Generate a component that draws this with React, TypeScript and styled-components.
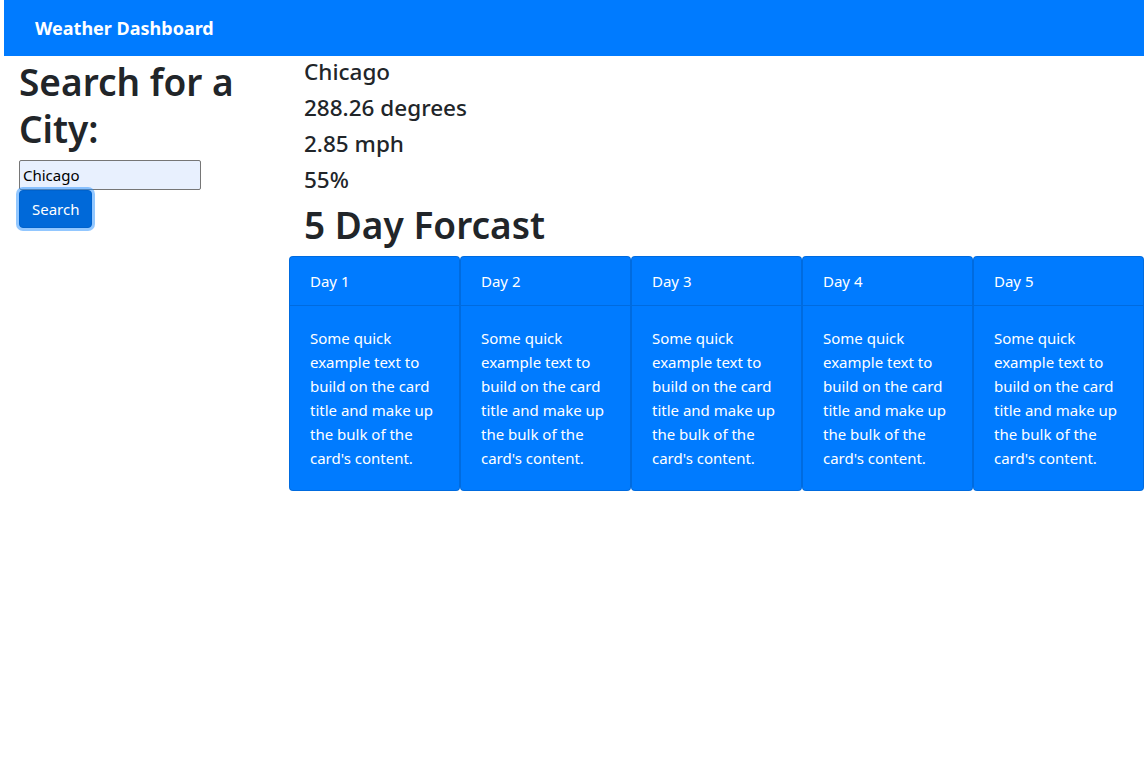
import React from "react";
import styled, { createGlobalStyle } from "styled-components";

const Global = createGlobalStyle`
  html, body { margin: 0; padding: 0; background: #fff; }
  body {
    padding-left: 4px;
    font-family: "Noto Sans", "Open Sans", sans-serif;
    font-size: 16px;
    line-height: 1.5;
    color: #212529;
  }
  * { box-sizing: border-box; }
`;

const Navbar = styled.nav`
  height: 56px;
  background: #007bff;
  display: flex;
  align-items: center;
  padding: 0 31px;
`;

const Brand = styled.span`
  color: #fff;
  font-size: 18px;
  font-weight: 700;
  line-height: 1;
`;

const Row = styled.div`
  display: flex;
  width: 1140px;
`;

const SideCol = styled.div`
  width: 285px;
  padding: 0 15px;
  display: flex;
  flex-direction: column;
  align-items: flex-start;
`;

const MainCol = styled.div`
  width: 855px;
`;

const Title = styled.h1`
  margin: 0 0 8px;
  padding-top: 2px;
  font-size: 37px;
  font-weight: 600;
  line-height: 47px;
`;

const CityInput = styled.input`
  width: 182px;
  height: 30px;
  border: 1px solid #767676;
  border-radius: 2px;
  background: #e8f0fe;
  font-family: inherit;
  font-size: 15px;
  color: #000;
  padding: 0 3px;
  outline: none;
`;

const SearchButton = styled.button`
  height: 38px;
  padding: 0 12px;
  background: #0069d9;
  border: 1px solid #0062cc;
  border-radius: 4px;
  color: #fff;
  font-family: inherit;
  font-size: 15px;
  box-shadow: 0 0 0 3px rgba(38, 143, 255, 0.5);
  cursor: pointer;
`;

const Info = styled.div`
  padding: 2px 15px 0;
`;

const Stat = styled.h4`
  margin: 0 0 8px;
  font-size: 22.5px;
  font-weight: 500;
  line-height: 28px;
`;

const Forecast = styled.h1`
  margin: 0 0 8px;
  font-size: 37px;
  font-weight: 600;
  line-height: 46px;
`;

const CardGroup = styled.div`
  display: flex;
`;

const Card = styled.div`
  flex: 1;
  background: #007bff;
  color: #fff;
  border: 1px solid rgba(0, 0, 0, 0.125);
  border-radius: 4px;
  display: flex;
  flex-direction: column;
`;

const CardHeader = styled.div`
  padding: 12px 20px;
  height: 49px;
  border-bottom: 1px solid rgba(0, 0, 0, 0.125);
  font-size: 15px;
  line-height: 24px;
`;

const CardBody = styled.div`
  padding: 20px;
`;

const CardText = styled.p`
  margin: 0;
  font-size: 15px;
  line-height: 24px;
`;

const days = ["Day 1", "Day 2", "Day 3", "Day 4", "Day 5"];

export default function App() {
  return (
    <>
      <Global />
      <Navbar>
        <Brand>Weather Dashboard</Brand>
      </Navbar>
      <Row>
        <SideCol>
          <Title>Search for a City:</Title>
          <CityInput defaultValue="Chicago" />
          <SearchButton>Search</SearchButton>
        </SideCol>
        <MainCol>
          <Info>
            <Stat>Chicago</Stat>
            <Stat>288.26 degrees</Stat>
            <Stat>2.85 mph</Stat>
            <Stat>55%</Stat>
            <Forecast>5 Day Forcast</Forecast>
          </Info>
          <CardGroup>
            {days.map((d) => (
              <Card key={d}>
                <CardHeader>{d}</CardHeader>
                <CardBody>
                  <CardText>
                    Some quick example text to build on the card title and make up the bulk of the card's content.
                  </CardText>
                </CardBody>
              </Card>
            ))}
          </CardGroup>
        </MainCol>
      </Row>
    </>
  );
}
